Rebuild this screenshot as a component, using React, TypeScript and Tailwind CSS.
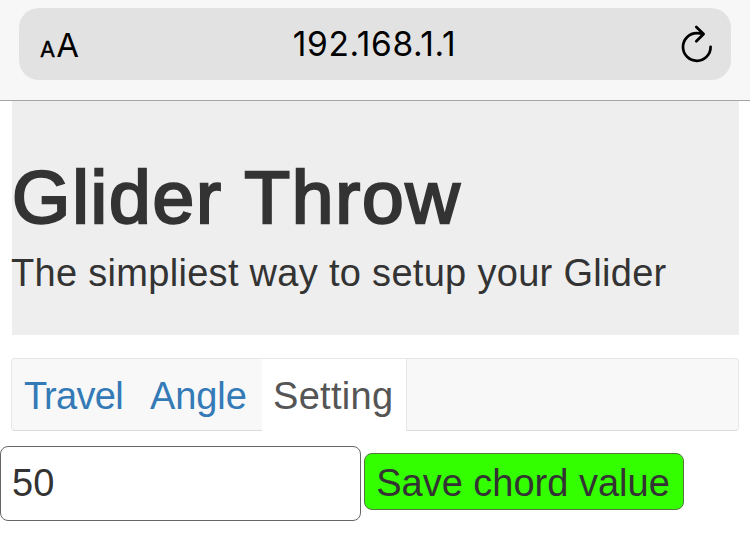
const tabs = [
  { label: 'Travel', box: 'w-[126px] pl-[12px] text-[#337ab7] tracking-[-0.7px] first-letter:tracking-[-3.2px]' },
  { label: 'Angle', box: 'w-[124px] pl-[12px] text-[#337ab7] tracking-[-0.1px]' },
  { label: 'Setting', box: 'w-[145px] pl-[11px] border-r border-[#e7e7e7] bg-white text-[#555] tracking-[0.3px]' },
];

function AddressBar() {
  return (
    <header className="h-[101px] border-b border-[#a5a5a5] bg-[#f7f7f7] px-[19px] pt-[8px] font-[Inter,sans-serif] text-black">
      <div className="flex h-[72px] items-center justify-between rounded-[20px] bg-[#e2e2e2] pl-[21px] pr-[17px]">
        <div className="flex w-[80px] items-baseline gap-[1px] pt-[5px] leading-[44px]">
          <span className="text-[22px] [-webkit-text-stroke:0.4px_black]">A</span>
          <span className="text-[33px]">A</span>
        </div>
        <span className="pr-[5px] text-[33.5px] leading-[44px] tracking-[0.6px]">192.168.1.1</span>
        <div className="flex w-[80px] justify-end">
          <svg width="34" height="40" viewBox="0 0 34 40" fill="none" stroke="black" strokeWidth="2.7" strokeLinecap="round" strokeLinejoin="round">
            <path d="M30.6 22.8A13.8 13.8 0 1 1 16.8 9.2Q20 9.2 23.3 9.9M16.3 3L23.6 10L16.3 17.3" />
          </svg>
        </div>
      </div>
    </header>
  );
}

export default function App() {
  return (
    <div className="h-[536px] w-[750px] overflow-hidden bg-white font-['Liberation_Sans',sans-serif] text-[38px] text-[#333]">
      <AddressBar />
      <main>
        <section className="ml-[12px] h-[234px] w-[727px] bg-[#eee] pt-[54px] whitespace-nowrap">
          <h1 className="h-[86px] text-[75px] leading-[84px] font-normal tracking-[1.8px] [-webkit-text-stroke:2.4px_#333]">Glider Throw</h1>
          <p className="-ml-px h-[64px] leading-[64px] tracking-[0.3px]">The simpliest way to setup your Glider</p>
        </section>
        <nav className="mt-[23px] ml-[11px] flex h-[73px] w-[728px] rounded-[4px] border border-[#e7e7e7] border-b-[#dadada] bg-[#f8f8f8]">
          {tabs.map((tab) => (
            <a key={tab.label} className={`h-[72px] leading-[75px] ${tab.box}`}>{tab.label}</a>
          ))}
        </nav>
        <form className="mt-[15px] flex items-start gap-[3px]" onSubmit={(e) => e.preventDefault()}>
          <input className="h-[75px] w-[361px] rounded-[8px] border border-[#666] bg-white px-[11px] outline-none" defaultValue="50" />
          <button className="mt-[7px] h-[57px] w-[320px] rounded-[8px] border border-[#55773f] bg-[#33ff00] pt-[3px] pr-[2px] leading-[52px] whitespace-nowrap">Save chord value</button>
        </form>
      </main>
    </div>
  );
}
